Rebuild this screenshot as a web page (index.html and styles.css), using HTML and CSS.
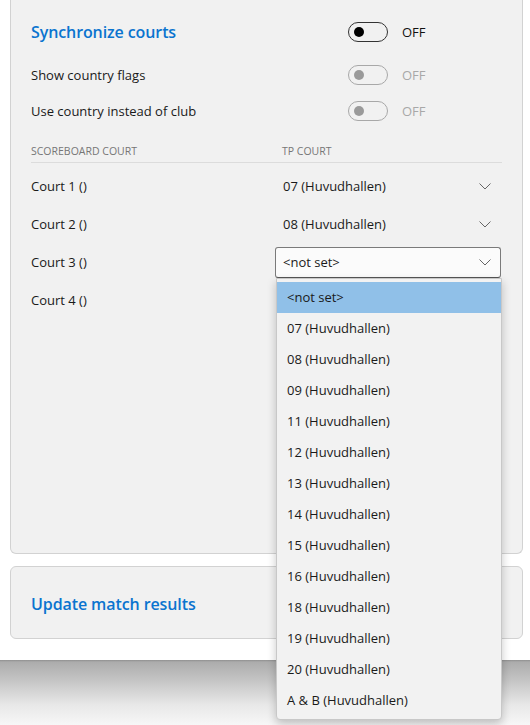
FILE: index.html
```html
<!DOCTYPE html>
<html>
<head>
<meta charset="utf-8">
<link rel="stylesheet" href="styles.css">
</head>
<body>
<div class="window">
  <section class="card card-sync">
    <div class="row title-row">
      <h2 class="title">Synchronize courts</h2>
      <span class="toggle"><span class="knob"></span></span>
      <span class="state">OFF</span>
    </div>
    <div class="row opt-row">
      <span class="label">Show country flags</span>
      <span class="toggle disabled"><span class="knob"></span></span>
      <span class="state disabled">OFF</span>
    </div>
    <div class="row opt-row">
      <span class="label">Use country instead of club</span>
      <span class="toggle disabled"><span class="knob"></span></span>
      <span class="state disabled">OFF</span>
    </div>
    <div class="col-head">
      <span class="col-a">SCOREBOARD COURT</span>
      <span class="col-b">TP COURT</span>
    </div>
    <div class="court-row">
      <span class="court">Court 1 ()</span>
      <span class="combo"><span class="combo-text">07 (Huvudhallen)</span><svg class="chev" width="12" height="7" viewBox="0 0 12 7"><path d="M0.5 0.5 L6 6 L11.5 0.5" fill="none" stroke="#666" stroke-width="1"/></svg></span>
    </div>
    <div class="court-row">
      <span class="court">Court 2 ()</span>
      <span class="combo"><span class="combo-text">08 (Huvudhallen)</span><svg class="chev" width="12" height="7" viewBox="0 0 12 7"><path d="M0.5 0.5 L6 6 L11.5 0.5" fill="none" stroke="#666" stroke-width="1"/></svg></span>
    </div>
    <div class="court-row">
      <span class="court">Court 3 ()</span>
      <span class="combo open"><span class="combo-text">&lt;not set&gt;</span><svg class="chev" width="12" height="7" viewBox="0 0 12 7"><path d="M0.5 0.5 L6 6 L11.5 0.5" fill="none" stroke="#666" stroke-width="1"/></svg></span>
    </div>
    <div class="court-row">
      <span class="court">Court 4 ()</span>
    </div>
  </section>
  <section class="card card-update">
    <h2 class="title">Update match results</h2>
  </section>
</div>
<div class="shade"></div>

<ul class="dropdown">
  <li class="item selected">&lt;not set&gt;</li>
  <li class="item">07 (Huvudhallen)</li>
  <li class="item">08 (Huvudhallen)</li>
  <li class="item">09 (Huvudhallen)</li>
  <li class="item">11 (Huvudhallen)</li>
  <li class="item">12 (Huvudhallen)</li>
  <li class="item">13 (Huvudhallen)</li>
  <li class="item">14 (Huvudhallen)</li>
  <li class="item">15 (Huvudhallen)</li>
  <li class="item">16 (Huvudhallen)</li>
  <li class="item">18 (Huvudhallen)</li>
  <li class="item">19 (Huvudhallen)</li>
  <li class="item">20 (Huvudhallen)</li>
  <li class="item">A &amp; B (Huvudhallen)</li>
</ul>
</body>
</html>
```
FILE: styles.css
```css
* { box-sizing: border-box; }
html, body {
  margin: 0;
  padding: 0;
  background: #ffffff;
  font-family: "Open Sans", "Noto Sans", "Liberation Sans", sans-serif;
  font-size: 13px;
  color: #1a1a1a;
  overflow: hidden;
}
.window {
  height: 660px;
  background: #ffffff;
  padding: 0 8px 0 10px;
}
.card {
  width: 513px;
  background: #f1f1f1;
  border: 1px solid #d2d2d2;
  border-radius: 6px;
  padding-left: 20px;
}
.card-sync {
  height: 554px;
  border-top: none;
  border-radius: 0 0 6px 6px;
  padding-top: 12px;
}
.card-update {
  margin-top: 12px;
  height: 73px;
  display: flex;
  align-items: center;
  padding-top: 2px;
}
.title {
  margin: 0;
  font-size: 16px;
  font-weight: 600;
  color: #0a74cf;
  letter-spacing: -0.1px;
}
.row {
  display: flex;
  align-items: center;
}
.title-row { height: 40px; margin-bottom: 5px; }
.opt-row { height: 36px; }
.row .title, .row .label { width: 317px; }
.label { color: #1a1a1a; }
.toggle {
  width: 40px;
  height: 20px;
  border: 1px solid #333;
  border-radius: 10px;
  display: flex;
  align-items: center;
  padding-left: 5px;
}
.knob {
  width: 10px;
  height: 10px;
  border-radius: 50%;
  background: #000;
}
.toggle.disabled { border-color: #a8a8a8; }
.toggle.disabled .knob { background: #9a9a9a; }
.state {
  margin-left: 14px;
  color: #111;
}
.state.disabled { color: #a8a8a8; }
.col-head {
  display: flex;
  height: 34px;
  align-items: flex-end;
  padding-bottom: 4px;
  border-bottom: 1px solid #dcdcdc;
  width: 471px;
  font-size: 10.5px;
  color: #767676;
  margin-bottom: 4px;
}
.col-a { width: 251px; }
.court-row {
  height: 38px;
  display: flex;
  align-items: center;
}
.court { width: 244px; }
.combo {
  width: 226px;
  height: 31px;
  display: flex;
  align-items: center;
  justify-content: space-between;
  padding: 0 9px 0 7px;
  border: 1px solid transparent;
  border-radius: 3px;
}
.combo.open {
  background: #fbfbfb;
  border-color: #7a7a7a;
  border-bottom-color: #555;
}
.chev { display: block; }
.shade {
  height: 65px;
  background: linear-gradient(#8f8f8f 0px, #acacac 2px, #c4c4c4 20px, #e8e8e8 45px, #f7f7f7 65px);
}
.dropdown {
  position: absolute;
  left: 276px;
  top: 278px;
  width: 226px;
  height: 442px;
  margin: 0;
  padding: 3px 0 0 0;
  list-style: none;
  background: #f2f2f2;
  border: 1px solid #c8c8c8;
  border-radius: 0 0 4px 4px;
  box-shadow: 0 4px 10px rgba(0,0,0,0.22);
}
.item {
  height: 31px;
  line-height: 31px;
  padding-left: 10px;
  color: #1a1a1a;
}
.item.selected {
  background: #90c0e8;
}
```
